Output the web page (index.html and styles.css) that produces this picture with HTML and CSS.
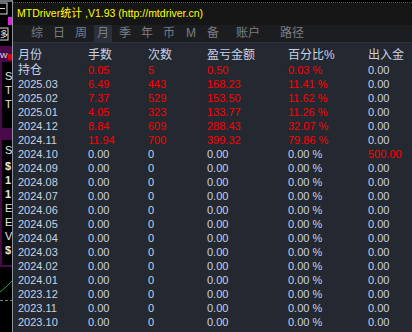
FILE: index.html
```html
<!DOCTYPE html>
<html lang="zh">
<head>
  <meta charset="UTF-8">
  <title>MTDriver统计</title>
  <link rel="stylesheet" href="styles.css">
</head>
<body>
  <div class="screen">
    <!-- chart window behind the stats panel -->
    <svg class="chart" width="12" height="332" viewBox="0 0 12 332">
      <rect x="0" y="0" width="12" height="332" fill="#000"/>
      <rect x="0" y="0" width="12" height="2" fill="#6a7078"/>
      <rect x="-1" y="3" width="8" height="11" fill="none" stroke="#d8d8d8"/>
      <rect x="0" y="8" width="5" height="1" fill="#d8d8d8"/>
      <rect x="8" y="17" width="4" height="8" fill="#e020e0"/>
      <rect x="-1" y="28" width="9" height="12" fill="none" stroke="#d8d8d8"/>
      <text x="0" y="37" class="glyph small">多</text>
      <rect x="0" y="46" width="12" height="16" fill="#4a0a4a"/>
      <text x="0" y="58" class="glyph small">W</text>
      <rect x="8" y="54" width="4" height="6" fill="#e00000"/>
      <rect x="0" y="62" width="2" height="66" fill="#4a0a4a"/>
      <text x="5" y="80" class="glyph">S</text>
      <text x="5" y="94" class="glyph">T</text>
      <text x="5" y="108" class="glyph">T</text>
      <rect x="0" y="128" width="12" height="12" fill="#4a0a4a"/>
      <rect x="0" y="140" width="2" height="126" fill="#4a0a4a"/>
      <text x="5" y="154" class="glyph">S</text>
      <text x="5" y="170" class="glyph bold">$</text>
      <text x="5" y="184" class="glyph bold">1</text>
      <text x="5" y="198" class="glyph bold">1</text>
      <text x="5" y="212" class="glyph">E</text>
      <text x="5" y="226" class="glyph">E</text>
      <text x="5" y="240" class="glyph">V</text>
      <text x="5" y="254" class="glyph bold">$</text>
      <rect x="0" y="265" width="12" height="2" fill="#4a0a4a"/>
      <polyline points="0,292 6,287 12,281" fill="none" stroke="#2aa04a" stroke-width="1"/>
      <line x1="0" y1="300.5" x2="12" y2="300.5" stroke="#7a7a7a" stroke-dasharray="3 2"/>
    </svg>

    <div class="panel">
      <div class="grid-edge"></div>
      <div class="title">MTDriver<span class="cn">统计</span> ,V1.93 (http://mtdriver.cn)</div>

      <div class="tabs">
        <span class="tab">综</span>
        <span class="tab">日</span>
        <span class="tab">周</span>
        <span class="tab active">月</span>
        <span class="tab">季</span>
        <span class="tab">年</span>
        <span class="tab">币</span>
        <span class="tab">M</span>
        <span class="tab">备</span>
        <span class="tab wide">账户</span>
        <span class="tab wide">路径</span>
      </div>

      <div class="stats">
        <div class="row head">
          <span>月份</span><span>手数</span><span>次数</span><span>盈亏金额</span><span>百分比%</span><span>出入金</span>
        </div>
        <div class="row open">
          <span class="cn">持仓</span><span class="red">0.05</span><span class="red">5</span><span class="red">0.50</span><span class="red">0.03 %</span><span>0.00</span>
        </div>
        <div class="row">
          <span>2025.03</span><span class="red">6.49</span><span class="red">443</span><span class="red">168.23</span><span class="red">11.41 %</span><span>0.00</span>
        </div>
        <div class="row">
          <span>2025.02</span><span class="red">7.37</span><span class="red">529</span><span class="red">153.50</span><span class="red">11.62 %</span><span>0.00</span>
        </div>
        <div class="row">
          <span>2025.01</span><span class="red">4.05</span><span class="red">323</span><span class="red">133.77</span><span class="red">11.26 %</span><span>0.00</span>
        </div>
        <div class="row">
          <span>2024.12</span><span class="red">8.84</span><span class="red">609</span><span class="red">288.43</span><span class="red">32.07 %</span><span>0.00</span>
        </div>
        <div class="row">
          <span>2024.11</span><span class="red">11.94</span><span class="red">700</span><span class="red">399.32</span><span class="red">79.86 %</span><span>0.00</span>
        </div>
        <div class="row">
          <span>2024.10</span><span>0.00</span><span>0</span><span>0.00</span><span>0.00 %</span><span class="red">500.00</span>
        </div>
        <div class="row"><span>2024.09</span><span>0.00</span><span>0</span><span>0.00</span><span>0.00 %</span><span>0.00</span></div>
        <div class="row"><span>2024.08</span><span>0.00</span><span>0</span><span>0.00</span><span>0.00 %</span><span>0.00</span></div>
        <div class="row"><span>2024.07</span><span>0.00</span><span>0</span><span>0.00</span><span>0.00 %</span><span>0.00</span></div>
        <div class="row"><span>2024.06</span><span>0.00</span><span>0</span><span>0.00</span><span>0.00 %</span><span>0.00</span></div>
        <div class="row"><span>2024.05</span><span>0.00</span><span>0</span><span>0.00</span><span>0.00 %</span><span>0.00</span></div>
        <div class="row"><span>2024.04</span><span>0.00</span><span>0</span><span>0.00</span><span>0.00 %</span><span>0.00</span></div>
        <div class="row"><span>2024.03</span><span>0.00</span><span>0</span><span>0.00</span><span>0.00 %</span><span>0.00</span></div>
        <div class="row"><span>2024.02</span><span>0.00</span><span>0</span><span>0.00</span><span>0.00 %</span><span>0.00</span></div>
        <div class="row"><span>2024.01</span><span>0.00</span><span>0</span><span>0.00</span><span>0.00 %</span><span>0.00</span></div>
        <div class="row"><span>2023.12</span><span>0.00</span><span>0</span><span>0.00</span><span>0.00 %</span><span>0.00</span></div>
        <div class="row"><span>2023.11</span><span>0.00</span><span>0</span><span>0.00</span><span>0.00 %</span><span>0.00</span></div>
        <div class="row"><span>2023.10</span><span>0.00</span><span>0</span><span>0.00</span><span>0.00 %</span><span>0.00</span></div>
      </div>
    </div>
  </div>
</body>
</html>
```

FILE: styles.css
```css
* {
  box-sizing: border-box;
  margin: 0;
  padding: 0;
}

html, body {
  width: 412px;
  height: 332px;
  overflow: hidden;
  background: #000;
}

body {
  font-family: "Liberation Sans", "Noto Sans CJK SC", sans-serif;
  color: #c8d2e6;
}

.screen {
  display: flex;
  height: 332px;
}

/* strip of the price chart left of the panel */
.chart {
  flex: 0 0 12px;
  display: block;
}

.chart .glyph {
  font-family: "Liberation Sans", "Noto Sans CJK SC", sans-serif;
  font-size: 11px;
  fill: #e8e8e8;
}

.chart .small {
  font-size: 8px;
}

.chart .bold {
  font-weight: bold;
}

/* stats panel */
.panel {
  flex: 1;
  display: flex;
  flex-direction: column;
  border-left: 1px solid #8a929e;
  background: #232831;
  min-width: 0;
}

.grid-edge {
  height: 3px;
  background: #000;
  border-bottom: 1px dotted #55606c;
}

.title {
  height: 22px;
  line-height: 20px;
  padding-left: 4px;
  background: #161616;
  color: #ffff00;
  font-size: 10.5px;
  white-space: nowrap;
}

.title .cn {
  font-size: 11px;
}

/* period tabs */
.tabs {
  display: flex;
  height: 18px;
  padding-left: 13px;
  background: #1c1d20;
  border-bottom: 1px solid #2c313b;
}

.tab {
  width: 22px;
  text-align: center;
  line-height: 17px;
  font-size: 12px;
  color: #7c7e83;
}

.tab.active {
  width: 18px;
  margin: 0 2px;
  background: #2a303b;
}

.tab.wide {
  width: 44px;
  margin-left: 2px;
}

.tab.wide:last-child {
  margin-left: 0;
}

/* monthly table */
.stats {
  padding: 5px 0 0 5px;
}

.row {
  display: grid;
  grid-template-columns: 70px 60px 59px 81px 80px 1fr;
  height: 14px;
  line-height: 14px;
  font-size: 11px;
  white-space: nowrap;
}

.row.head {
  height: 15px;
  line-height: 15px;
  font-size: 12px;
}

.row.open .cn {
  font-size: 12px;
}

.red {
  color: #ff0000;
}
```
